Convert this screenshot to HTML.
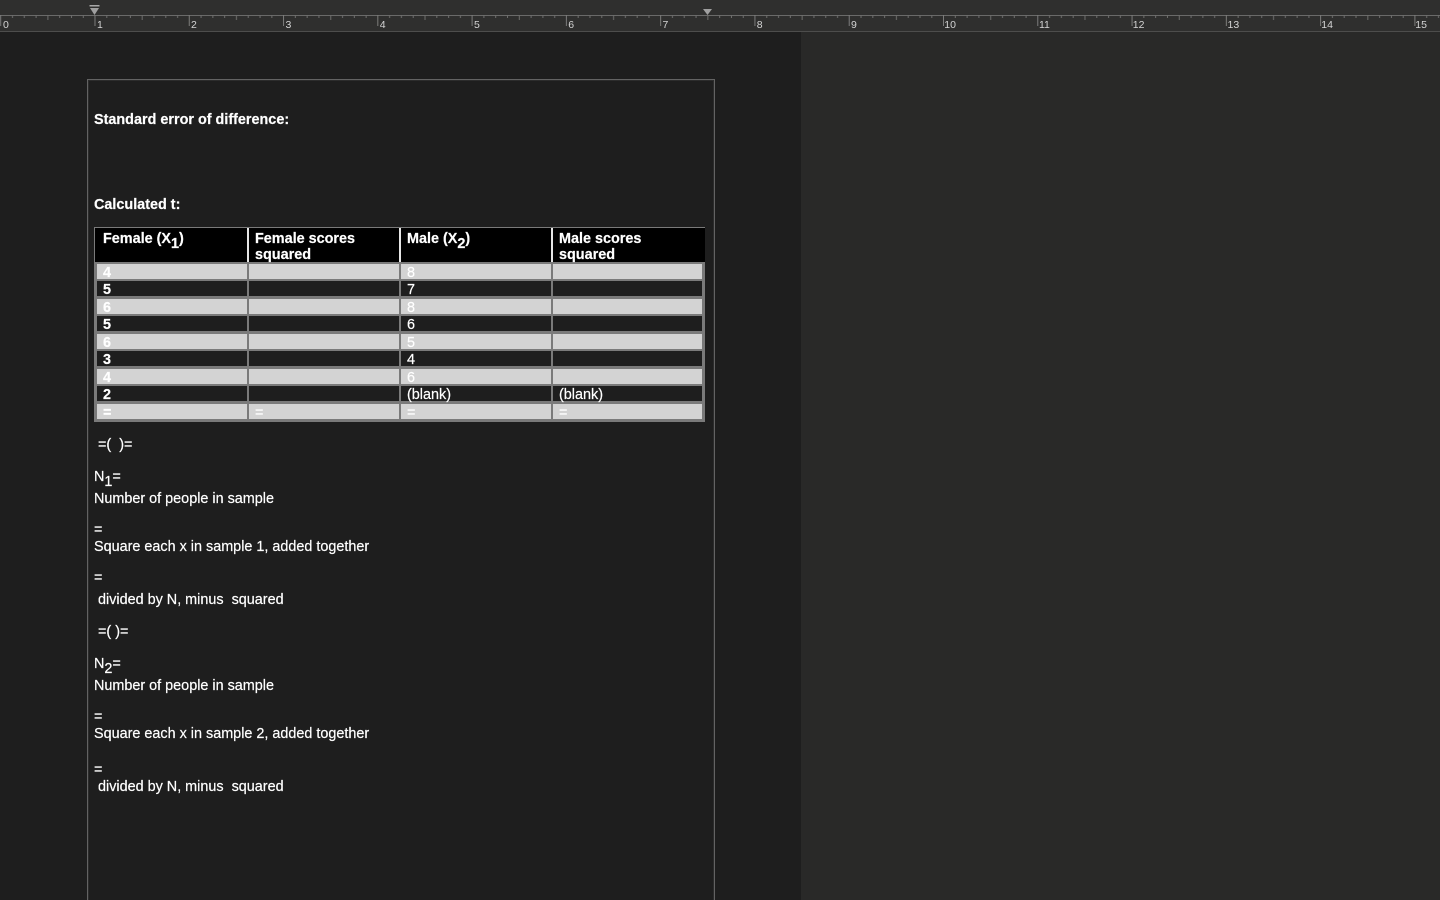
<!DOCTYPE html>
<html><head><meta charset="utf-8">
<style>
html,body{margin:0;padding:0;width:1440px;height:900px;overflow:hidden;background:#1e1e1e}
body{position:relative;font-family:"Liberation Sans",sans-serif;color:#fff;font-size:14.4px;-webkit-text-stroke:.2px #fff}
.a{position:absolute;white-space:pre;line-height:16px}
.b{font-weight:bold}
.n{position:absolute;top:19.5px;font-size:10.5px;line-height:10px;color:#d4d4d4;-webkit-text-stroke:0}
.r{position:absolute;left:97px;width:605px;height:15px;display:block}
.c{position:absolute;top:0;height:15px}
sub{font-size:14.4px;line-height:0;vertical-align:-5px}
.l{background:#d3d3d3}.d{background:#1e1e1e}
</style></head><body>
<div style="position:absolute;left:801px;top:0;width:639px;height:900px;background:#292928"></div>
<div style="position:absolute;left:0;top:0;width:1440px;height:31px;background:#2f2f2e;border-bottom:1px solid #4d4d4c"></div>
<svg style="position:absolute;left:0;top:0" width="1440" height="32">
<defs><pattern id="t" x="0.2" y="0" width="94.28" height="32" patternUnits="userSpaceOnUse">
<g stroke="#6e6e6d" stroke-width="1">
<path d="M.5 15V26" stroke="#7c7c7b"/>
<path d="M12.3 15V18M24.1 15V18M35.9 15V18M59.5 15V18M71.3 15V18M83.1 15V18"/>
<path d="M47.7 15V20"/>
</g></pattern></defs>
<rect x="0" y="15" width="1440" height="1" fill="#6a6a69"/>
<rect x="0" y="15" width="1440" height="12" fill="url(#t)"/>
<path d="M89.500 5H99.500V6.500H89.500Z" fill="#a8a8a8"/>
<path d="M90 8H99L94.500 15Z" fill="#a0a0a0"/>
<path d="M703 9H712L707.500 15Z" fill="#a0a0a0"/>
</svg>
<div class="n" style="left:3px">0</div><div class="n" style="left:97px">1</div><div class="n" style="left:191px">2</div><div class="n" style="left:285.500px">3</div><div class="n" style="left:379.800px">4</div><div class="n" style="left:474px">5</div><div class="n" style="left:568.200px">6</div><div class="n" style="left:662.500px">7</div><div class="n" style="left:756.800px">8</div><div class="n" style="left:851px">9</div><div class="n" style="left:944.300px">10</div><div class="n" style="left:1039px">11</div><div class="n" style="left:1132.800px">12</div><div class="n" style="left:1227.500px">13</div><div class="n" style="left:1321.300px">14</div><div class="n" style="left:1415.300px">15</div>

<div style="position:absolute;left:87px;top:79px;width:626px;height:830px;border:1px solid #636363;border-bottom:0;box-shadow:inset 1px 1px 0 #2c2c2c,inset -1px 0 0 #2c2c2c"></div>

<div class="a b" style="left:94px;top:112px">Standard error of difference:</div>
<div class="a b" style="left:94px;top:197px">Calculated t:</div>

<div style="position:absolute;left:94px;top:227px;width:611px;height:195px;background:#7a7a7a"></div>
<div style="position:absolute;left:95px;top:228px;width:610px;height:34px;background:#000"></div>
<div style="position:absolute;left:247px;top:228px;width:2px;height:34px;background:#e6e6e6"></div>
<div style="position:absolute;left:399px;top:228px;width:2px;height:34px;background:#e6e6e6"></div>
<div style="position:absolute;left:551px;top:228px;width:2px;height:34px;background:#e6e6e6"></div>
<div class="a b" style="left:103px;top:231px">Female (X<sub>1</sub>)</div>
<div class="a b" style="left:255px;top:231px">Female scores
squared</div>
<div class="a b" style="left:407px;top:231px">Male (X<sub>2</sub>)</div>
<div class="a b" style="left:559px;top:231px">Male scores
squared</div>

<div class="r" style="top:264px"><div class="c l" style="left:0;width:150px"></div><div class="c l" style="left:152px;width:150px"></div><div class="c l" style="left:304px;width:150px"></div><div class="c l" style="left:456px;width:149px"></div></div>
<div class="r" style="top:281px"><div class="c d" style="left:0;width:150px"></div><div class="c d" style="left:152px;width:150px"></div><div class="c d" style="left:304px;width:150px"></div><div class="c d" style="left:456px;width:149px"></div></div>
<div class="r" style="top:299px"><div class="c l" style="left:0;width:150px"></div><div class="c l" style="left:152px;width:150px"></div><div class="c l" style="left:304px;width:150px"></div><div class="c l" style="left:456px;width:149px"></div></div>
<div class="r" style="top:316px"><div class="c d" style="left:0;width:150px"></div><div class="c d" style="left:152px;width:150px"></div><div class="c d" style="left:304px;width:150px"></div><div class="c d" style="left:456px;width:149px"></div></div>
<div class="r" style="top:334px"><div class="c l" style="left:0;width:150px"></div><div class="c l" style="left:152px;width:150px"></div><div class="c l" style="left:304px;width:150px"></div><div class="c l" style="left:456px;width:149px"></div></div>
<div class="r" style="top:351px"><div class="c d" style="left:0;width:150px"></div><div class="c d" style="left:152px;width:150px"></div><div class="c d" style="left:304px;width:150px"></div><div class="c d" style="left:456px;width:149px"></div></div>
<div class="r" style="top:369px"><div class="c l" style="left:0;width:150px"></div><div class="c l" style="left:152px;width:150px"></div><div class="c l" style="left:304px;width:150px"></div><div class="c l" style="left:456px;width:149px"></div></div>
<div class="r" style="top:386px"><div class="c d" style="left:0;width:150px"></div><div class="c d" style="left:152px;width:150px"></div><div class="c d" style="left:304px;width:150px"></div><div class="c d" style="left:456px;width:149px"></div></div>
<div class="r" style="top:404px"><div class="c l" style="left:0;width:150px"></div><div class="c l" style="left:152px;width:150px"></div><div class="c l" style="left:304px;width:150px"></div><div class="c l" style="left:456px;width:149px"></div></div>

<div class="a b" style="left:103px;top:265px">4</div><div class="a" style="left:407px;top:265px">8</div>
<div class="a b" style="left:103px;top:282px">5</div><div class="a" style="left:407px;top:282px">7</div>
<div class="a b" style="left:103px;top:300px">6</div><div class="a" style="left:407px;top:300px">8</div>
<div class="a b" style="left:103px;top:317px">5</div><div class="a" style="left:407px;top:317px">6</div>
<div class="a b" style="left:103px;top:335px">6</div><div class="a" style="left:407px;top:335px">5</div>
<div class="a b" style="left:103px;top:352px">3</div><div class="a" style="left:407px;top:352px">4</div>
<div class="a b" style="left:103px;top:370px">4</div><div class="a" style="left:407px;top:370px">6</div>
<div class="a b" style="left:103px;top:387px">2</div><div class="a" style="left:407px;top:387px">(blank)</div><div class="a" style="left:559px;top:387px">(blank)</div>
<div class="a b" style="left:103px;top:405px">=</div><div class="a" style="left:255px;top:405px">=</div><div class="a" style="left:407px;top:405px">=</div><div class="a" style="left:559px;top:405px">=</div>

<div class="a" style="left:98px;top:437px">=(  )=</div>
<div class="a" style="left:94px;top:469px">N<sub>1</sub>=</div>
<div class="a" style="left:94px;top:491px">Number of people in sample</div>
<div class="a" style="left:94px;top:522px">=</div>
<div class="a" style="left:94px;top:539px">Square each x in sample 1, added together</div>
<div class="a" style="left:94px;top:570px">=</div>
<div class="a" style="left:98px;top:592px">divided by N, minus  squared</div>
<div class="a" style="left:98px;top:624px">=( )=</div>
<div class="a" style="left:94px;top:656px">N<sub>2</sub>=</div>
<div class="a" style="left:94px;top:678px">Number of people in sample</div>
<div class="a" style="left:94px;top:709px">=</div>
<div class="a" style="left:94px;top:726px">Square each x in sample 2, added together</div>
<div class="a" style="left:94px;top:762px">=</div>
<div class="a" style="left:98px;top:779px">divided by N, minus  squared</div>
</body></html>
